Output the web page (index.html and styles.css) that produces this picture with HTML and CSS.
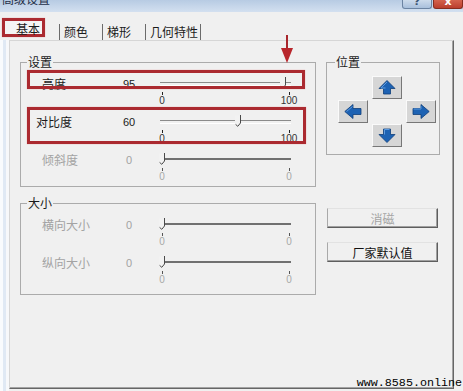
FILE: index.html
```html
<!DOCTYPE html>
<html lang="zh-CN">
<head>
    <meta charset="UTF-8">
    <meta name="viewport" content="width=device-width, initial-scale=1.0">
    <title>高级设置</title>
    <link rel="stylesheet" href="styles.css">
</head>
<body>
    <div class="window">
        <div class="titlebar">
            <span class="title">高级设置</span>
            <div class="caption-buttons">
                <span class="cap-btn help">?</span>
                <span class="cap-btn close">x</span>
            </div>
        </div>

        <div class="tabs">
            <div class="tab active">基本</div>
            <div class="tab">颜色</div>
            <div class="tab">梯形</div>
            <div class="tab last">几何特性</div>
        </div>

        <div class="client">
            <div class="panel">
                <div class="col-left">
                    <fieldset class="group group-settings">
                        <legend>设置</legend>
                        <div class="rows">
                            <div class="row">
                                <span class="row-label">亮度</span>
                                <span class="row-value">95</span>
                                <div class="slider">
                                    <div class="track">
                                        <div class="range">
                                            <svg class="thumb" style="left: 95%" width="8" height="12" viewBox="0 0 8 12"><path d="M1 .5h5.5V8L3.8 11.3 1 8z" fill="#f2f2f2"/><path d="M6.5 0v8L3.8 11.3 1.6 9.4" fill="none" stroke="#4a4a4a"/></svg>
                                        </div>
                                    </div>
                                    <div class="scale"><span>0</span><span>100</span></div>
                                </div>
                            </div>
                            <div class="row">
                                <span class="row-label shift">对比度</span>
                                <span class="row-value">60</span>
                                <div class="slider">
                                    <div class="track">
                                        <div class="range">
                                            <svg class="thumb" style="left: 60%" width="8" height="12" viewBox="0 0 8 12"><path d="M1 .5h5.5V8L3.8 11.3 1 8z" fill="#f2f2f2"/><path d="M6.5 0v8L3.8 11.3 1.6 9.4" fill="none" stroke="#4a4a4a"/></svg>
                                        </div>
                                    </div>
                                    <div class="scale"><span>0</span><span>100</span></div>
                                </div>
                            </div>
                            <div class="row disabled">
                                <span class="row-label">倾斜度</span>
                                <span class="row-value">0</span>
                                <div class="slider">
                                    <div class="track">
                                        <div class="range">
                                            <svg class="thumb" style="left: 0%" width="8" height="12" viewBox="0 0 8 12"><path d="M1 .5h5.5V8L3.8 11.3 1 8z" fill="#f2f2f2"/><path d="M6.5 0v8L3.8 11.3 1.6 9.4" fill="none" stroke="#4a4a4a"/></svg>
                                        </div>
                                    </div>
                                    <div class="scale"><span>0</span><span>0</span></div>
                                </div>
                            </div>
                        </div>
                    </fieldset>

                    <fieldset class="group group-size">
                        <legend>大小</legend>
                        <div class="rows">
                            <div class="row disabled">
                                <span class="row-label">横向大小</span>
                                <span class="row-value">0</span>
                                <div class="slider">
                                    <div class="track">
                                        <div class="range">
                                            <svg class="thumb" style="left: 0%" width="8" height="12" viewBox="0 0 8 12"><path d="M1 .5h5.5V8L3.8 11.3 1 8z" fill="#f2f2f2"/><path d="M6.5 0v8L3.8 11.3 1.6 9.4" fill="none" stroke="#4a4a4a"/></svg>
                                        </div>
                                    </div>
                                    <div class="scale"><span>0</span><span>0</span></div>
                                </div>
                            </div>
                            <div class="row disabled">
                                <span class="row-label">纵向大小</span>
                                <span class="row-value">0</span>
                                <div class="slider">
                                    <div class="track">
                                        <div class="range">
                                            <svg class="thumb" style="left: 0%" width="8" height="12" viewBox="0 0 8 12"><path d="M1 .5h5.5V8L3.8 11.3 1 8z" fill="#f2f2f2"/><path d="M6.5 0v8L3.8 11.3 1.6 9.4" fill="none" stroke="#4a4a4a"/></svg>
                                        </div>
                                    </div>
                                    <div class="scale"><span>0</span><span>0</span></div>
                                </div>
                            </div>
                        </div>
                    </fieldset>
                </div>

                <div class="col-right">
                    <fieldset class="group group-pos">
                        <legend>位置</legend>
                        <div class="pad">
                            <button class="arrow-btn up">
                                <svg width="18" height="15" viewBox="0 0 18 15"><path d="M9 .5l8 8h-4.5V14h-7V8.5H1z" fill="#1d62b3" stroke="#0e3d7a" stroke-width=".8"/><path d="M9 2L3 8h4.5" fill="none" stroke="#5d9be0" stroke-width="1"/></svg>
                            </button>
                            <button class="arrow-btn left">
                                <svg width="18" height="15" viewBox="0 0 18 15"><path d="M.8 7.5L9 .5v4h8v6H9v4z" fill="#1d62b3" stroke="#0e3d7a" stroke-width=".8"/><path d="M2.5 7.5L8.5 2.5" fill="none" stroke="#5d9be0" stroke-width="1"/></svg>
                            </button>
                            <button class="arrow-btn right">
                                <svg width="18" height="15" viewBox="0 0 18 15"><path d="M17.2 7.5L9 .5v4H1v6h8v4z" fill="#1d62b3" stroke="#0e3d7a" stroke-width=".8"/><path d="M1.5 5h7.5V2" fill="none" stroke="#5d9be0" stroke-width="1"/></svg>
                            </button>
                            <button class="arrow-btn down">
                                <svg width="18" height="15" viewBox="0 0 18 15"><path d="M9 14.5l8-8h-4.5V1h-7v5.5H1z" fill="#1d62b3" stroke="#0e3d7a" stroke-width=".8"/><path d="M6.5 6.5V1.5h5" fill="none" stroke="#5d9be0" stroke-width="1"/></svg>
                            </button>
                        </div>
                    </fieldset>

                    <button class="btn" disabled>消磁</button>
                    <button class="btn">厂家默认值</button>
                </div>
            </div>
        </div>

        <!-- red annotations drawn over the dialog -->
        <div class="mark mark-bright"></div>
        <div class="mark mark-contrast"></div>
        <svg class="red-arrow" width="12" height="29" viewBox="0 0 12 29"><rect x="5" y="0" width="2" height="14" fill="#a8262c"/><path d="M0 13h12L6 28z" fill="#b8262c"/></svg>

        <div class="watermark">www.8585.online</div>
    </div>
</body>
</html>
```

FILE: styles.css
```css
/* Reset and Base Styles */
* {
    margin: 0;
    padding: 0;
    box-sizing: border-box;
}

body {
    font-family: "Noto Sans CJK SC", "Noto Sans", sans-serif;
    font-size: 12px;
    color: #1b1b1b;
    background: #f0f0f0;
}

.window {
    position: relative;
    width: 463px;
    height: 391px;
    overflow: hidden;
    background: #f0f0f0;
}

/* Title bar */
.titlebar {
    display: flex;
    justify-content: space-between;
    height: 12px;
    background: linear-gradient(#b7cbe3, #d3e0f0);
    overflow: hidden;
}

.title {
    margin-top: -7px;
    padding-left: 2px;
    font-size: 12px;
    line-height: 12px;
    color: #1f2f47;
}

.caption-buttons {
    display: flex;
    gap: 1px;
}

.cap-btn {
    width: 30px;
    height: 9px;
    border: 1px solid #6c84a2;
    border-top: none;
    border-radius: 0 0 3px 3px;
    font-family: "DejaVu Sans", sans-serif;
    font-size: 11px;
    font-weight: bold;
    line-height: 3px;
    text-align: center;
    color: #fff;
    overflow: hidden;
}

.help {
    background: linear-gradient(#cddbeb, #a9c0dc);
    color: #3d5573;
}

.close {
    background: linear-gradient(#d4634e, #bb3e2d);
    border-color: #872d20;
}

/* Tabs */
.tabs {
    display: flex;
    align-items: flex-end;
    height: 23px;
    margin-top: 5px;
    padding-left: 2px;
}

.tab {
    height: 16px;
    padding: 0 14px 0 4px;
    border-left: 1px solid #6b6b6b;
    line-height: 16px;
}

.tab.active {
    align-self: flex-start;
    width: 43px;
    height: 19px;
    margin: 1px 14px 0 0;
    padding: 1px 0 0 11px;
    border: 3px solid #ab2a30;
    background: #f4f4f4;
    line-height: 14px;
    box-shadow: 0 0 1px #e79a9d;
}

.tab.last {
    padding-right: 2px;
    border-right: 1px solid #6b6b6b;
}

/* Client area */
.client {
    height: 351px;
    padding-left: 9px;
    background: linear-gradient(to right, #f9fbfd 0 3px, #e0e9f4 3px 6px, #f7f8fa 6px 9px, #f0f0f0 9px);
}

.panel {
    display: flex;
    align-items: flex-start;
    gap: 10px;
    width: 445px;
    height: 349px;
    padding: 14px 0 0 10px;
    border: 1px solid #d6d6d6;
    border-right-color: #666;
    border-bottom-color: #666;
    box-shadow: inset -1px -1px #a3a3a3;
    background: #f0f0f0;
}

.col-left {
    display: flex;
    flex-direction: column;
    width: 296px;
}

.col-right {
    display: flex;
    flex-direction: column;
    width: 114px;
}

/* Group boxes */
.group {
    min-width: 0;
    border: 1px solid #ababab;
}

.group legend {
    margin-left: 6px;
    padding: 0 1px;
    font-size: 12px;
    line-height: 14px;
}

.group-size {
    margin-top: 9px;
}

.group-pos legend {
    margin-left: 8px;
}

.rows {
    display: flex;
    flex-direction: column;
    gap: 8px;
    padding: 7px 0 4px 21px;
}

.group-size .rows {
    padding-bottom: 9px;
}

/* Slider rows */
.row {
    display: flex;
    align-items: flex-start;
    height: 30px;
}

.row-label {
    width: 76px;
    padding-top: 1px;
    line-height: 14px;
}

.row-label.shift {
    margin-left: -6px;
    width: 82px;
}

.row-value {
    width: 22px;
    padding-top: 1px;
    font-family: "Liberation Sans", Arial, sans-serif;
    font-size: 11px;
    line-height: 14px;
    text-align: center;
}

.slider {
    width: 131px;
    margin-left: 20px;
}

.track {
    position: relative;
    height: 14px;
    padding: 0 2px;
}

.track::before {
    content: '';
    position: absolute;
    left: 0;
    right: 0;
    top: 6px;
    height: 2px;
    border-top: 1px solid #8b8b8b;
    border-bottom: 1px solid #fff;
}

.range {
    position: relative;
    height: 14px;
}

.thumb {
    position: absolute;
    top: 1px;
    margin-left: -4px;
}

.scale {
    display: flex;
    justify-content: space-between;
    margin: 0 -7px;
}

.scale span {
    width: 18px;
    font-family: "Liberation Sans", Arial, sans-serif;
    font-size: 10px;
    line-height: 11px;
    text-align: center;
    color: #333;
}

.scale span::before {
    content: '';
    display: block;
    width: 1px;
    height: 3px;
    margin: 2px auto 0;
    background: #222;
}

.row.disabled {
    color: #a3a3a3;
}

.disabled .track::before {
    border: none;
    background: #707070;
}

.disabled .scale span {
    color: #a8a8a8;
}

.disabled .scale span::before {
    background: #555;
}

/* Position pad */
.pad {
    display: grid;
    grid-template-columns: repeat(3, 30px);
    grid-template-rows: repeat(3, 23px);
    grid-template-areas:
        ". up ."
        "left . right"
        ". down .";
    gap: 1px 4px;
    padding: 7px 0 7px 11px;
}

.arrow-btn {
    display: flex;
    align-items: center;
    justify-content: center;
    background: #d6d6d6;
    border: 1px solid;
    border-color: #fafafa #777 #777 #fafafa;
}

.up { grid-area: up; }
.left { grid-area: left; }
.right { grid-area: right; }
.down { grid-area: down; }

/* Buttons */
.btn {
    width: 111px;
    height: 20px;
    margin: 53px 0 0 1px;
    border: 1px solid;
    border-color: #e2e2e2 #5e5e5e #5e5e5e #a9a9a9;
    box-shadow: inset -1px -1px #a0a0a0;
    background: #f0f0f0;
    font-family: inherit;
    font-size: 12px;
    line-height: 17px;
    color: #111;
}

.btn + .btn {
    margin-top: 14px;
}

.btn:disabled {
    color: #a4a4a4;
}

/* Annotations */
.mark {
    position: absolute;
    border: 3px solid #ab2a30;
    box-shadow: 0 0 1px #e79a9d;
}

.mark-bright {
    left: 27px;
    top: 70px;
    width: 278px;
    height: 19px;
}

.mark-contrast {
    left: 27px;
    top: 107px;
    width: 279px;
    height: 37px;
}

.red-arrow {
    position: absolute;
    left: 281px;
    top: 35px;
}

.watermark {
    position: absolute;
    right: 1px;
    bottom: 2px;
    font-family: "Liberation Mono", monospace;
    font-size: 11.7px;
    line-height: 12px;
    color: #000;
}
```
